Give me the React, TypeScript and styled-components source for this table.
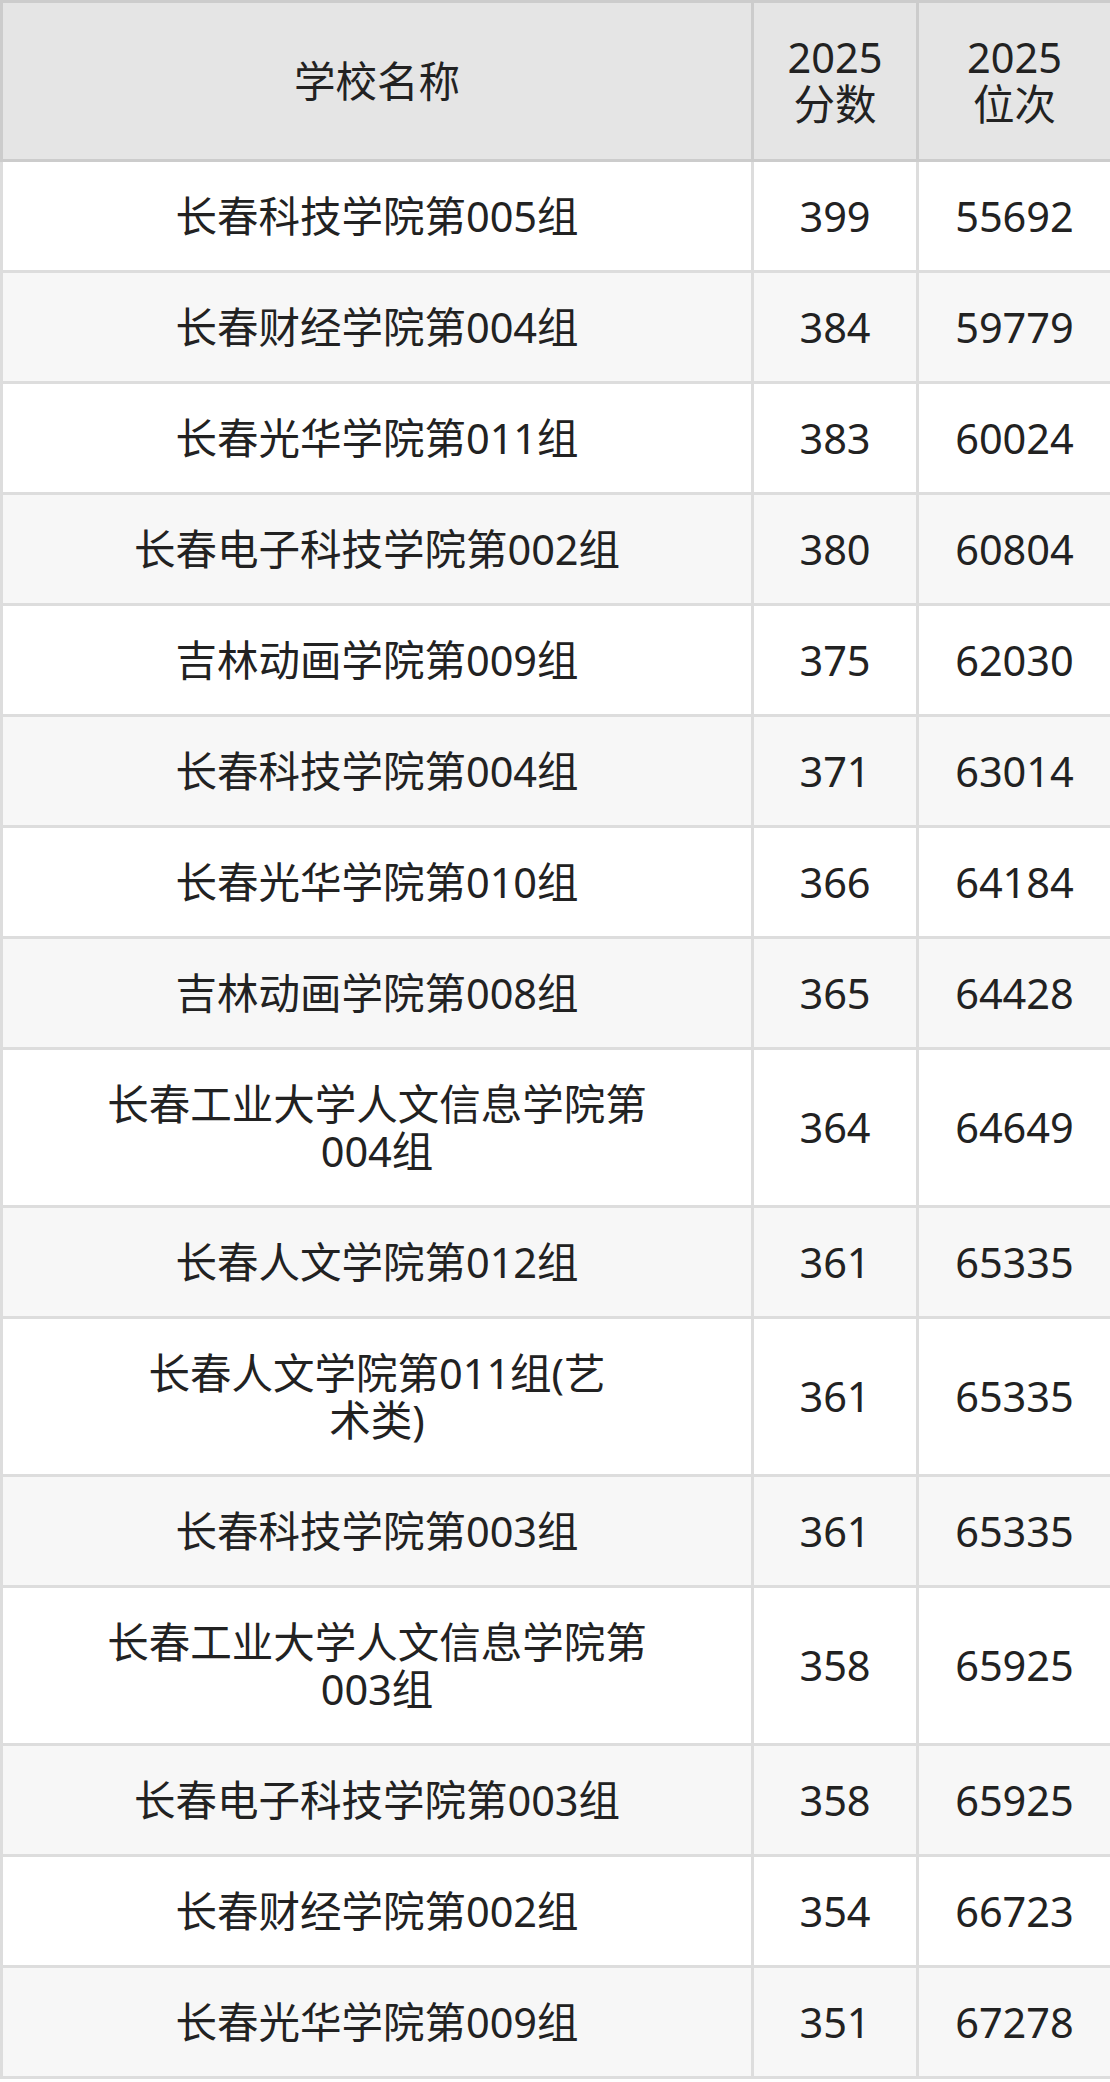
import React from 'react';
import styled, { createGlobalStyle } from 'styled-components';

const GlobalStyle = createGlobalStyle`
  html, body {
    margin: 0;
    padding: 0;
    background: #ffffff;
  }
  body {
    font-family: "Noto Sans", "Noto Sans CJK SC", sans-serif;
    color: #222222;
  }
`;

const Table = styled.table`
  width: 1110px;
  table-layout: fixed;
  border-collapse: collapse;
  font-size: 41.5px;
  line-height: 47px;
`;

const HeadCell = styled.th`
  background: #e5e5e5;
  border: 3px solid #cccccc;
  padding: 31px 8px;
  font-weight: 400;
  text-align: center;
  vertical-align: middle;
`;

const Row = styled.tr<{ $odd: boolean }>`
  background: ${(p) => (p.$odd ? '#f7f7f7' : '#ffffff')};
`;

const Cell = styled.td`
  border: 3px solid #dddddd;
  padding: 30.5px 8px;
  text-align: center;
  vertical-align: middle;
`;

const Line = styled.span`
  display: block;
`;

const rows: [string, number, number][] = [
  ['长春科技学院第005组', 399, 55692],
  ['长春财经学院第004组', 384, 59779],
  ['长春光华学院第011组', 383, 60024],
  ['长春电子科技学院第002组', 380, 60804],
  ['吉林动画学院第009组', 375, 62030],
  ['长春科技学院第004组', 371, 63014],
  ['长春光华学院第010组', 366, 64184],
  ['吉林动画学院第008组', 365, 64428],
  ['长春工业大学人文信息学院第004组', 364, 64649],
  ['长春人文学院第012组', 361, 65335],
  ['长春人文学院第011组(艺术类)', 361, 65335],
  ['长春科技学院第003组', 361, 65335],
  ['长春工业大学人文信息学院第003组', 358, 65925],
  ['长春电子科技学院第003组', 358, 65925],
  ['长春财经学院第002组', 354, 66723],
  ['长春光华学院第009组', 351, 67278],
];

// the source wraps school names every 13 characters
function chunk(name: string): string[] {
  const out: string[] = [];
  for (let i = 0; i < name.length; i += 13) out.push(name.slice(i, i + 13));
  return out;
}

export default function App() {
  return (
    <>
      <GlobalStyle />
      <Table>
        <colgroup>
          <col style={{ width: '751px' }} />
          <col style={{ width: '165px' }} />
          <col style={{ width: '194px' }} />
        </colgroup>
        <thead>
          <tr>
            <HeadCell>学校名称</HeadCell>
            <HeadCell>
              <Line>2025</Line>
              <Line>分数</Line>
            </HeadCell>
            <HeadCell>
              <Line>2025</Line>
              <Line>位次</Line>
            </HeadCell>
          </tr>
        </thead>
        <tbody>
          {rows.map(([name, score, rank], i) => (
            <Row key={i} $odd={i % 2 === 1}>
              <Cell>
                {chunk(name).map((part, j) => (
                  <Line key={j}>{part}</Line>
                ))}
              </Cell>
              <Cell>{score}</Cell>
              <Cell>{rank}</Cell>
            </Row>
          ))}
        </tbody>
      </Table>
    </>
  );
}
